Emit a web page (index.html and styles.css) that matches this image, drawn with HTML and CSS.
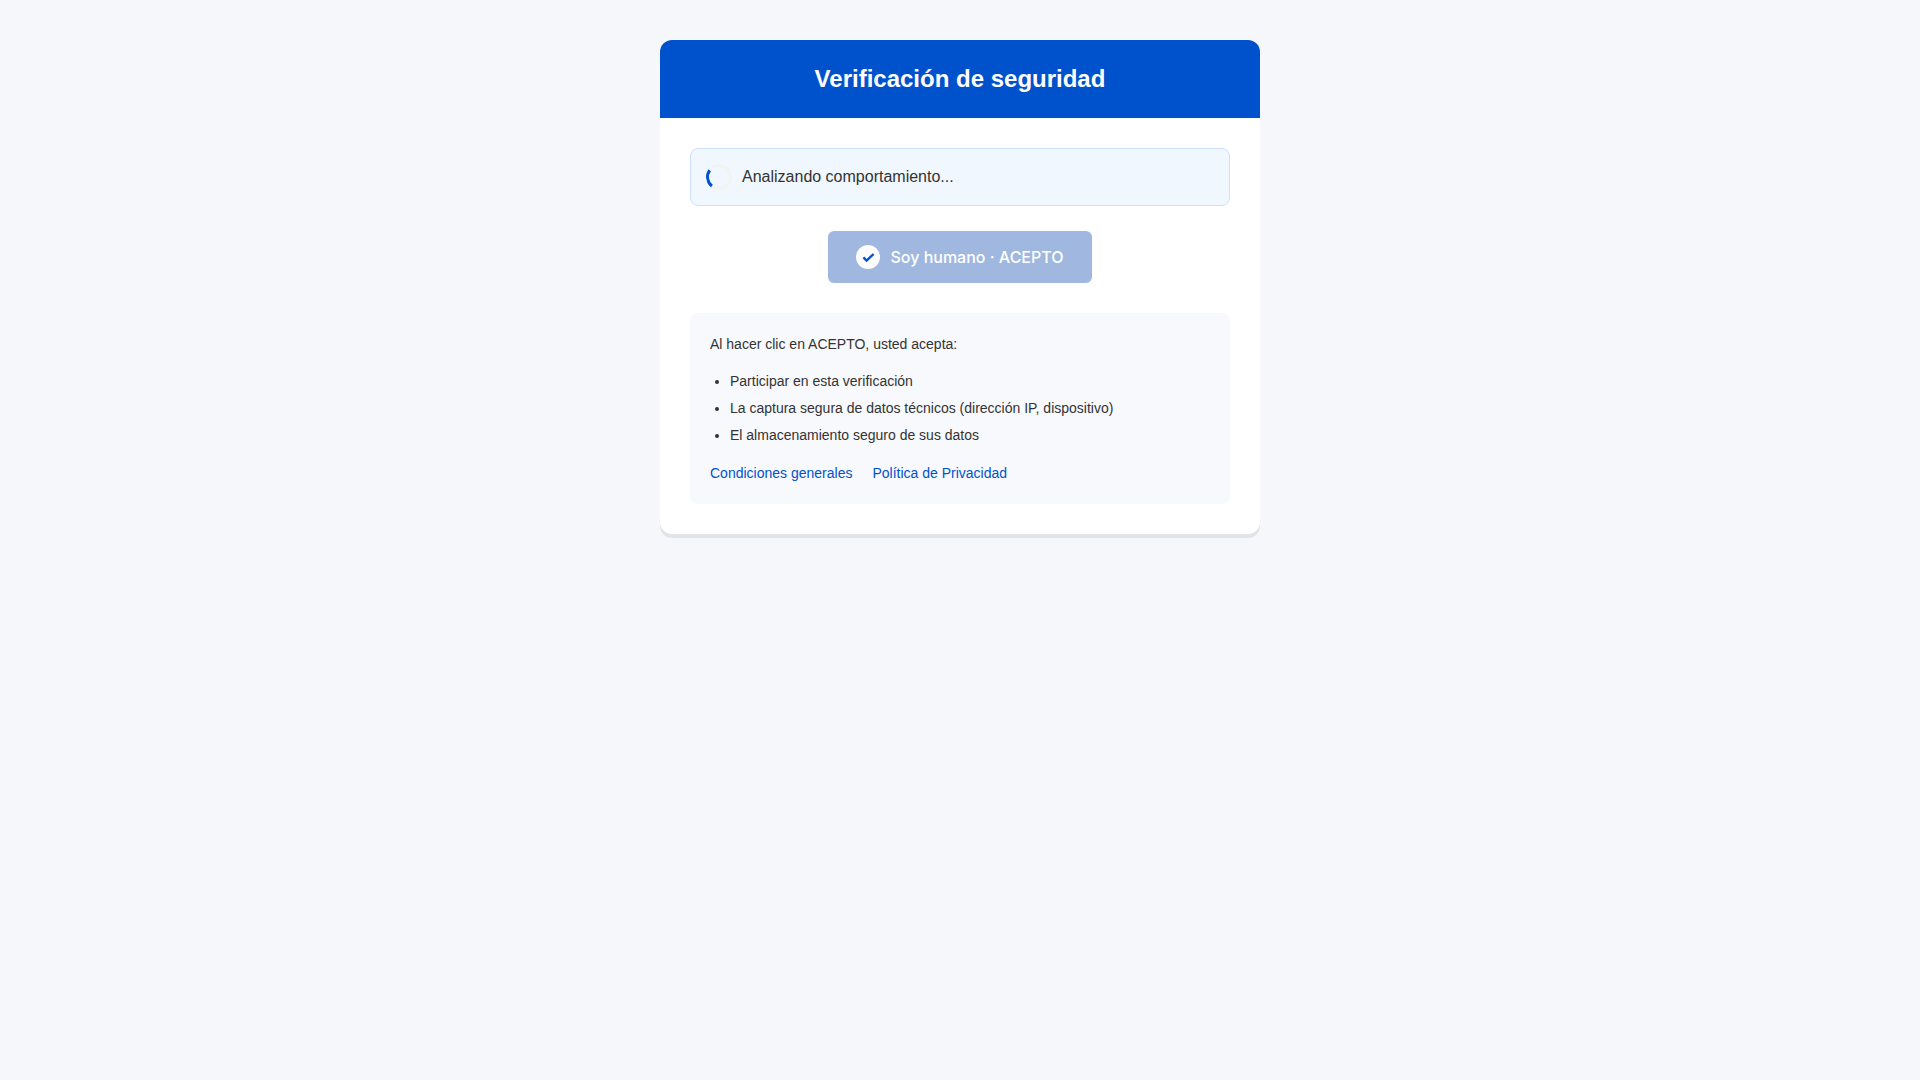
FILE: index.html
```html
<!DOCTYPE html>
<html lang="es">
<head>
    <meta charset="UTF-8">
    <meta name="viewport" content="width=device-width, initial-scale=1.0">
    <title>Verificación de seguridad</title>
    <link rel="stylesheet" href="styles.css">
</head>
<body>
    <main class="container">
        <header class="header">
            <h1>Verificación de seguridad</h1>
        </header>

        <div class="content">
            <div class="status" role="status">
                <div class="spinner"></div>
                <span>Analizando comportamiento...</span>
            </div>

            <button type="button" class="verify-btn" disabled>
                <svg class="check" viewBox="0 0 24 24" aria-hidden="true">
                    <circle cx="12" cy="12" r="12" fill="#fff"/>
                    <path d="M7.4 12.4l3.2 3.2 7-6.6" fill="none" stroke="#0052cc" stroke-width="2.4"/>
                </svg>
                <span>Soy humano · ACEPTO</span>
            </button>

            <div class="legal">
                <p>Al hacer clic en ACEPTO, usted acepta:</p>
                <ul>
                    <li>Participar en esta verificación</li>
                    <li>La captura segura de datos técnicos (dirección IP, dispositivo)</li>
                    <li>El almacenamiento seguro de sus datos</li>
                </ul>
                <div class="links">
                    <a href="#">Condiciones generales</a>
                    <a href="#">Política de Privacidad</a>
                </div>
            </div>
        </div>
    </main>
</body>
</html>
```
FILE: styles.css
```css
* {
    box-sizing: border-box;
    margin: 0;
    padding: 0;
}

body {
    font-family: "Liberation Sans", Arial, sans-serif;
    font-size: 16px;
    line-height: 26px;
    color: #333;
    background-color: #f5f7fb;
    padding: 40px 20px;
}

.container {
    max-width: 600px;
    margin: 0 auto;
    background: #fff;
    border-radius: 12px;
    box-shadow: 0 4px 0 rgba(0, 0, 0, 0.08);
    overflow: hidden;
}

.header {
    background: #0052cc;
    color: #fff;
    padding: 20px;
    text-align: center;
}

.header h1 {
    font-size: 24px;
    line-height: 38px;
}

.content {
    padding: 30px;
}

.status {
    display: flex;
    align-items: center;
    gap: 10px;
    padding: 15px;
    background: #f0f7ff;
    border: 1px solid #cce0ff;
    border-radius: 8px;
}

.spinner {
    width: 26px;
    height: 26px;
    border: 3px solid #f3f3f3;
    border-top-color: #0052cc;
    border-radius: 50%;
    transform: rotate(-98deg);
}

.verify-btn {
    display: flex;
    align-items: center;
    gap: 10px;
    margin: 25px auto 30px;
    padding: 14px 28px;
    font-family: Inter, sans-serif;
    font-size: 16px;
    font-weight: 500;
    line-height: 24px;
    color: #fff;
    background: #a0b8e0;
    border: none;
    border-radius: 6px;
    cursor: not-allowed;
}

.check {
    width: 24px;
    height: 24px;
}

.legal {
    padding: 20px;
    font-size: 14px;
    line-height: 22px;
    background: #f8f9fd;
    border-radius: 8px;
}

.legal ul {
    margin: 15px 0 16px;
    padding-left: 20px;
}

.legal li + li {
    margin-top: 5px;
}

.links {
    display: flex;
    flex-wrap: wrap;
    gap: 20px;
}

.links a {
    color: #0052cc;
    text-decoration: none;
}

.links a:hover {
    text-decoration: underline;
}
```
